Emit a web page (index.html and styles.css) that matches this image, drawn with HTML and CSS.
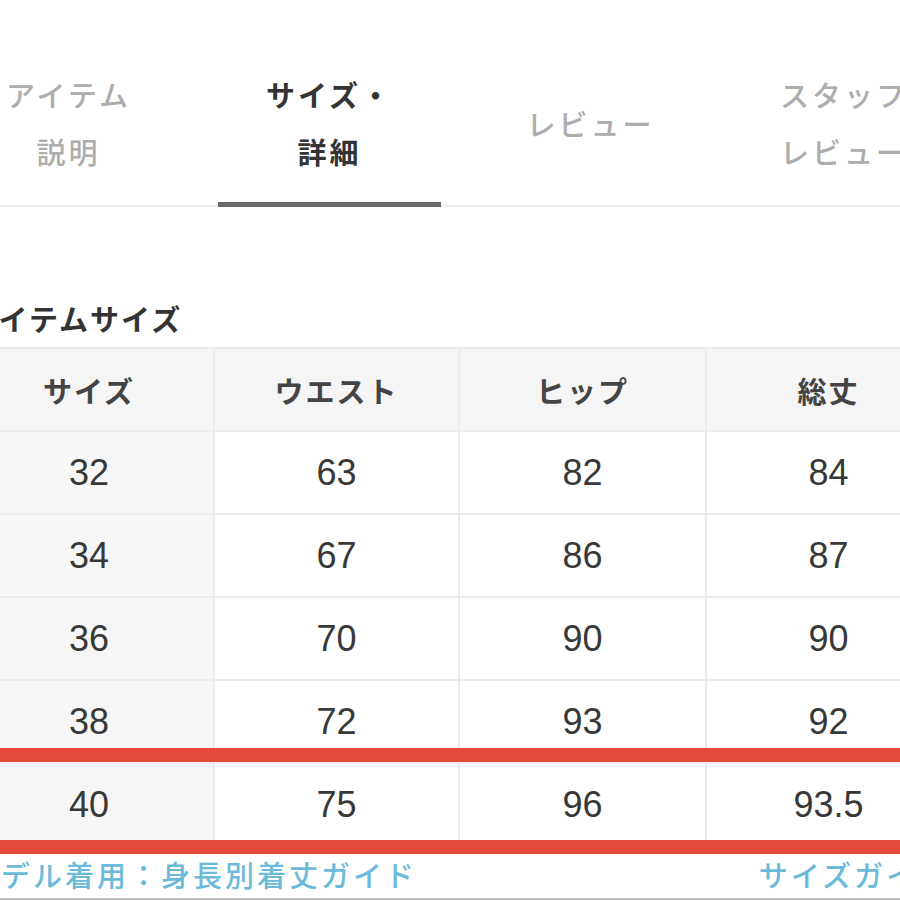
FILE: index.html
```html
<!DOCTYPE html>
<html lang="ja">
<head>
<meta charset="utf-8">
<title>サイズ・詳細</title>
<link rel="stylesheet" href="styles.css">
</head>
<body>
<div class="page">
  <nav class="tabs">
    <div class="tab"><span class="label">アイテム<br>説明</span></div>
    <div class="tab active"><span class="label">サイズ・<br>詳細</span></div>
    <div class="tab"><span class="label">レビュー</span></div>
    <div class="tab tab-last"><span class="label">スタッフ<br>レビュー</span></div>
  </nav>

  <section class="sizes">
    <h2 class="title">アイテムサイズ</h2>
    <div class="table-wrap">
      <table class="size-table">
        <colgroup>
          <col class="col-size">
          <col class="col-waist">
          <col class="col-hip">
          <col class="col-length">
        </colgroup>
        <thead>
          <tr><th>サイズ</th><th>ウエスト</th><th>ヒップ</th><th>総丈</th></tr>
        </thead>
        <tbody>
          <tr><td>32</td><td>63</td><td>82</td><td>84</td></tr>
          <tr><td>34</td><td>67</td><td>86</td><td>87</td></tr>
          <tr><td>36</td><td>70</td><td>90</td><td>90</td></tr>
          <tr><td>38</td><td>72</td><td>93</td><td>92</td></tr>
          <tr><td>40</td><td>75</td><td>96</td><td>93.5</td></tr>
        </tbody>
      </table>
      <div class="mark mark-top"></div>
      <div class="mark mark-bottom"></div>
    </div>
    <div class="links">
      <a class="link">モデル着用：身長別着丈ガイド</a>
      <a class="link">サイズガイド</a>
    </div>
  </section>
  <div class="bottom-rule"></div>
</div>
</body>
</html>
```
FILE: styles.css
```css
html, body {
  margin: 0;
  padding: 0;
  background: #ffffff;
  overflow: hidden;
}

body {
  font-family: "Noto Sans CJK JP", "Noto Sans", sans-serif;
  color: #333333;
  width: 900px;
  height: 900px;
}

.page {
  width: 900px;
  height: 900px;
  overflow: hidden;
}

/* Tabs */
.tabs {
  display: grid;
  grid-template-columns: 261px 261px 261px 241px;
  margin-left: -62px;
  width: 1024px;
  border-bottom: 2px solid #efefef;
}

.tab {
  position: relative;
  height: 205px;
  box-sizing: border-box;
  padding-top: 66px;
  display: flex;
  justify-content: center;
}

.label {
  height: 114px;
  display: flex;
  align-items: center;
  text-align: center;
  font-size: 29px;
  line-height: 57px;
  letter-spacing: 3px;
  color: #adadad;
  font-weight: 500;
}

.tab.active .label {
  color: #333333;
  font-weight: 700;
}

.tab.active::after {
  content: "";
  position: absolute;
  left: 19px;
  right: 19px;
  bottom: -2px;
  height: 5px;
  background: #6a6a6a;
}

.tab-last {
  justify-content: flex-start;
  padding-left: 59px;
}

.tab-last .label {
  text-align: left;
  white-space: nowrap;
}

/* Sizes section */
.sizes {
  margin-left: -37px;
  width: 987px;
}

.title {
  margin: 91px 0 9px;
  padding-left: 6px;
  font-size: 29px;
  line-height: 40px;
  font-weight: 700;
  letter-spacing: 2px;
  color: #333333;
}

.table-wrap {
  position: relative;
}

.size-table {
  width: 987px;
  table-layout: fixed;
  border-collapse: collapse;
}

.col-size { width: 250px; }
.col-waist { width: 245px; }
.col-hip { width: 247px; }
.col-length { width: 245px; }

.size-table th,
.size-table td {
  height: 83px;
  padding: 0;
  box-sizing: border-box;
  border: 2px solid #ececec;
  text-align: center;
  vertical-align: middle;
}

.size-table th {
  background: #f5f5f5;
  font-size: 29px;
  font-weight: 700;
  letter-spacing: 2px;
  color: #444444;
}

.size-table td {
  font-family: "Liberation Sans", Arial, sans-serif;
  font-size: 36px;
  color: #383838;
  background: #ffffff;
}

.size-table td:first-child {
  background: #f6f6f6;
}

.mark {
  position: absolute;
  left: 0;
  right: 0;
  height: 14px;
  background: #e5493a;
}

.mark-top {
  top: 401px;
}

.mark-bottom {
  top: 493px;
}

.links {
  display: flex;
  justify-content: space-between;
  align-items: center;
  height: 51px;
  box-sizing: border-box;
  padding: 2px 0 0 6px;
}

.link {
  font-size: 29px;
  line-height: 40px;
  letter-spacing: 3px;
  color: #6cbad9;
  font-weight: 500;
}

.bottom-rule {
  border-top: 2px solid #bdbdbd;
}
```
